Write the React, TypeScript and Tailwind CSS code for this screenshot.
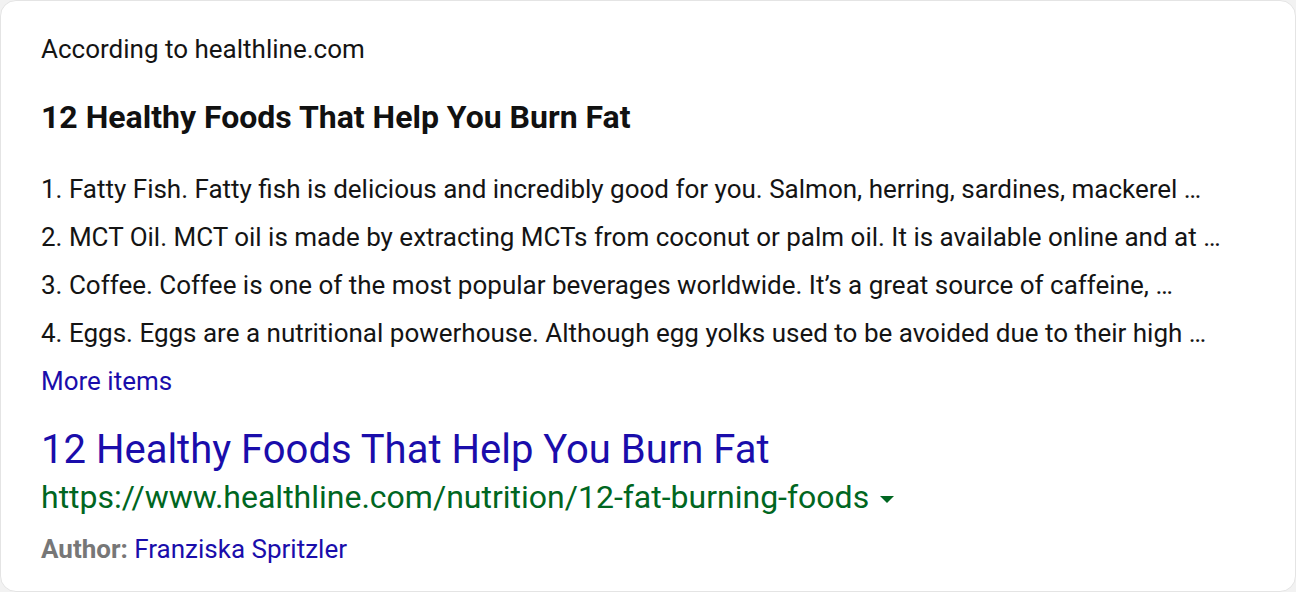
export default function App() {
  const items = [
    "1. Fatty Fish. Fatty fish is delicious and incredibly good for you. Salmon, herring, sardines, mackerel …",
    "2. MCT Oil. MCT oil is made by extracting MCTs from coconut or palm oil. It is available online and at …",
    "3. Coffee. Coffee is one of the most popular beverages worldwide. It’s a great source of caffeine, …",
    "4. Eggs. Eggs are a nutritional powerhouse. Although egg yolks used to be avoided due to their high …",
  ];

  return (
    <div className="w-[1296px] h-[592px] bg-[#f2f2f2] font-['Roboto',sans-serif]">
      <div className="h-full rounded-[16px] border border-[#e4e4e4] bg-white px-[40px] pt-[29px]">
        <p className="text-[26px] leading-[38px] text-[#141414]">According to healthline.com</p>
        <h2 className="mt-[29px] text-[32px] leading-[40px] font-bold text-[#111]">
          12 Healthy Foods That Help You Burn Fat
        </h2>
        <ul className="mt-[28px]">
          {items.map((item) => (
            <li key={item} className="text-[26px] leading-[48px] text-[#141414]">{item}</li>
          ))}
        </ul>
        <a className="block text-[26px] leading-[48px] text-[#1a0dab]">More items</a>
        <a className="mt-[20px] block text-[40px] leading-[50px] text-[#1a0dab]">
          12 Healthy Foods That Help You Burn Fat
        </a>
        <div className="flex items-center gap-[11px] text-[32px] leading-[44px] text-[#006621]">
          <span>https://www.healthline.com/nutrition/12-fat-burning-foods</span>
          <svg width="14" height="8" viewBox="0 0 14 8" className="mt-[6px]">
            <path d="M0 0 L14 0 L7 7 Z" fill="#006621" />
          </svg>
        </div>
        <p className="mt-[10px] text-[26px] leading-[40px]">
          <span className="font-bold text-[#777]">Author: </span>
          <a className="text-[#1a0dab]">Franziska Spritzler</a>
        </p>
      </div>
    </div>
  );
}
